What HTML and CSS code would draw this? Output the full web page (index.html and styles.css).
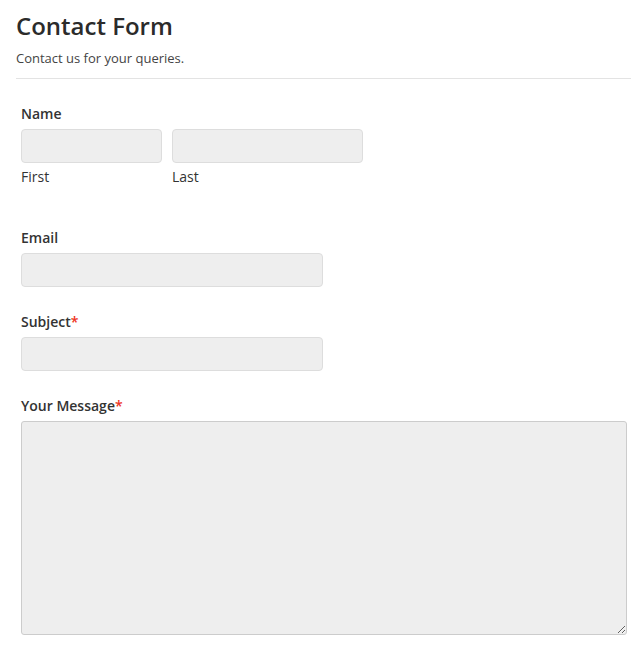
FILE: index.html
```html
<!DOCTYPE html>
<html lang="en">
<head>
  <meta charset="UTF-8">
  <title>Contact Form</title>
  <link rel="stylesheet" href="styles.css">
</head>
<body>
  <div class="page">
    <div class="header">
      <h2 class="title">Contact Form</h2>
      <p class="desc">Contact us for your queries.</p>
    </div>
    <form class="form">
      <div class="field field-name">
        <label class="label">Name</label>
        <div class="name-row">
          <div class="name-part first">
            <input type="text" class="input">
            <span class="sublabel">First</span>
          </div>
          <div class="name-part last">
            <input type="text" class="input">
            <span class="sublabel">Last</span>
          </div>
        </div>
      </div>
      <div class="field">
        <label class="label">Email</label>
        <input type="email" class="input medium">
      </div>
      <div class="field">
        <label class="label">Subject<span class="req">*</span></label>
        <input type="text" class="input medium">
      </div>
      <div class="field">
        <label class="label">Your Message<span class="req">*</span></label>
        <textarea class="input message"></textarea>
      </div>
    </form>
  </div>
</body>
</html>
```

FILE: styles.css
```css
* {
  margin: 0;
  padding: 0;
  box-sizing: border-box;
}
body {
  font-family: "Open Sans", "Liberation Sans", sans-serif;
  color: #333;
  background: #fff;
}
.page {
  padding: 0 10px 0 16px;
}
.header {
  padding-top: 10px;
  padding-bottom: 11px;
  border-bottom: 1px solid #e3e3e3;
}
.title {
  font-size: 24px;
  font-weight: 600;
  line-height: 32px;
  color: #2b2b2b;
}
.desc {
  margin-top: 7px;
  font-size: 13px;
  line-height: 18px;
  color: #444;
}
.form {
  padding: 25px 0 0 5px;
}
.field {
  margin-bottom: 25px;
}
.field-name {
  margin-bottom: 41px;
}
.label {
  display: block;
  font-size: 14px;
  font-weight: 600;
  line-height: 20px;
  margin-bottom: 5px;
  color: #333;
}
.req {
  color: #e32;
}
.name-row {
  display: flex;
  gap: 10px;
  margin-top: 1px;
}
.name-part {
  display: flex;
  flex-direction: column;
}
.name-part.first {
  width: 141px;
}
.name-part.last {
  width: 191px;
}
.sublabel {
  font-size: 14px;
  line-height: 20px;
  margin-top: 4px;
  color: #333;
}
.input {
  display: block;
  width: 100%;
  height: 34px;
  background: #eee;
  border: 1px solid #ddd;
  border-radius: 4px;
  font-family: inherit;
  font-size: 14px;
  outline: none;
}
.input.medium {
  width: 302px;
}
.input.message {
  width: 606px;
  height: 214px;
  border-color: #ccc;
  border-radius: 3px;
  resize: vertical;
}
```
